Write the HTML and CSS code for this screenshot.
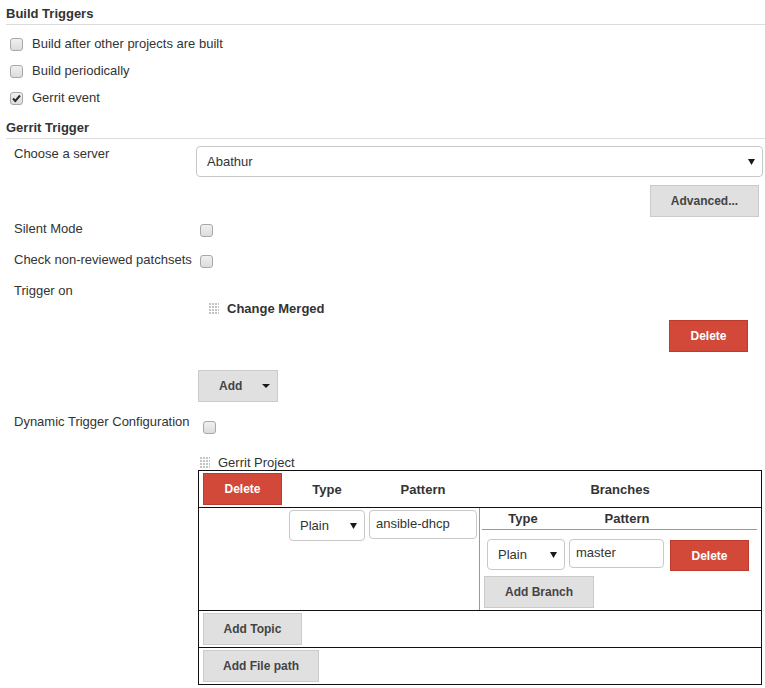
FILE: index.html
```html
<!DOCTYPE html>
<html>
<head>
<meta charset="utf-8">
<title>Build Triggers</title>
<link rel="stylesheet" href="styles.css">
</head>
<body>
<div class="section-title title-build">Build Triggers</div>
<div class="checks">
  <div class="check-row"><span class="cb"></span><span>Build after other projects are built</span></div>
  <div class="check-row"><span class="cb"></span><span>Build periodically</span></div>
  <div class="check-row"><span class="cb checked"><svg width="11" height="11" viewBox="0 0 11 11"><path d="M2 5.5 L4.3 8 L9 2.5" fill="none" stroke="#2b2b2b" stroke-width="2"/></svg></span><span>Gerrit event</span></div>
</div>
<div class="section-title title-gerrit">Gerrit Trigger</div>
<div class="form">
  <div class="row row-server">
    <div class="label">Choose a server</div>
    <div class="field">
      <div class="select select-wide"><span>Abathur</span><svg class="arrow" width="7" height="6" viewBox="0 0 7 6"><path d="M0 0 H7 L3.5 6 Z" fill="#1a1a1a"/></svg></div>
      <div class="adv-row"><button class="btn gray btn-adv">Advanced...</button></div>
    </div>
  </div>
  <div class="row row-check row-silent">
    <div class="label">Silent Mode</div>
    <div class="field"><span class="cb"></span></div>
  </div>
  <div class="row row-check">
    <div class="label">Check non-reviewed patchsets</div>
    <div class="field"><span class="cb"></span></div>
  </div>
  <div class="row row-trigger">
    <div class="label">Trigger on</div>
    <div class="field">
      <div class="repeated">
        <div class="rep-head"><span class="handle"></span><span class="rep-name">Change Merged</span></div>
        <div class="rep-actions"><button class="btn red btn-del">Delete</button></div>
      </div>
      <div class="add-wrap"><button class="btn gray btn-add"><span>Add</span><svg width="8" height="4" viewBox="0 0 8 4"><path d="M0 0 H8 L4 4 Z" fill="#1a1a1a"/></svg></button></div>
    </div>
  </div>
  <div class="row row-dynamic">
    <div class="label">Dynamic Trigger Configuration</div>
    <div class="field"><span class="cb"></span></div>
  </div>
  <div class="row row-project">
    <div class="label"></div>
    <div class="field">
      <div class="proj-head"><span class="handle"></span><span>Gerrit Project</span></div>
      <div class="ptable">
        <div class="prow prow-head">
          <div class="pcell cell-del"><button class="btn red btn-del">Delete</button></div>
          <div class="pcell th">Type</div>
          <div class="pcell th">Pattern</div>
          <div class="pcell th">Branches</div>
        </div>
        <div class="prow prow-body">
          <div class="pcell"></div>
          <div class="pcell cell-type"><div class="select select-type"><span>Plain</span><svg class="arrow" width="7" height="6" viewBox="0 0 7 6"><path d="M0 0 H7 L3.5 6 Z" fill="#1a1a1a"/></svg></div></div>
          <div class="pcell cell-pattern"><div class="input input-pattern">ansible-dhcp</div></div>
          <div class="pcell cell-branches">
            <div class="branches">
              <div class="br-head"><span class="br-type">Type</span><span class="br-pattern">Pattern</span></div>
              <div class="br-entry">
                <div class="select select-btype"><span>Plain</span><svg class="arrow" width="7" height="6" viewBox="0 0 7 6"><path d="M0 0 H7 L3.5 6 Z" fill="#1a1a1a"/></svg></div>
                <div class="input input-branch">master</div>
                <button class="btn red btn-del btn-del-branch">Delete</button>
              </div>
              <button class="btn gray btn-addbranch">Add Branch</button>
            </div>
          </div>
        </div>
        <div class="prow-full"><button class="btn gray btn-topic">Add Topic</button></div>
        <div class="prow-full"><button class="btn gray btn-file">Add File path</button></div>
      </div>
    </div>
  </div>
</div>
</body>
</html>
```

FILE: styles.css
```css
* { box-sizing: border-box; }

body {
  margin: 0;
  font-family: "Liberation Sans", Arial, sans-serif;
  font-size: 13px;
  color: #333;
  background: #fff;
}

.section-title {
  margin-left: 6px;
  font-weight: bold;
  line-height: 16px;
  border-bottom: 1px solid #dcdcdc;
}
.title-build { padding-top: 6px; height: 25px; }
.title-gerrit { padding-top: 9px; height: 28px; }

.checks { padding-top: 5px; }
.check-row {
  display: flex;
  align-items: center;
  height: 27px;
  padding-left: 10px;
}
.check-row .cb { margin-right: 9px; margin-top: 2px; }

.cb {
  display: inline-flex;
  align-items: center;
  justify-content: center;
  width: 13px;
  height: 13px;
  border: 1px solid #a8a8a8;
  border-radius: 3px;
  background: linear-gradient(#f0f0f0, #dcdcdc);
  flex: none;
}
.field > .cb { display: flex; }

.form { padding: 4px 2px 0 14px; }
.row {
  display: grid;
  grid-template-columns: 182px 1fr;
}
.label { line-height: 16px; padding-top: 1px; }

.row-server .label { padding-top: 3px; }
.select {
  display: flex;
  align-items: center;
  justify-content: space-between;
  border: 1px solid #c8c8c8;
  border-radius: 4px;
  background: #fff;
}
.select-wide {
  margin-top: 3px;
  height: 31px;
  padding: 0 7px 0 10px;
}
.adv-row {
  display: flex;
  justify-content: flex-end;
  padding-right: 4px;
  margin-top: 8px;
}

.btn {
  display: inline-flex;
  align-items: center;
  justify-content: center;
  font-family: "Liberation Sans", Arial, sans-serif;
  font-size: 12px;
  font-weight: bold;
  height: 32px;
  padding: 0;
  border-radius: 0;
  flex: none;
}
.gray {
  background: #e0e0e0;
  border: 1px solid #cbcbcb;
  color: #444;
}
.red {
  background: #d24939;
  border: 1px solid #bd3b2d;
  color: #fff;
}
.btn-adv { width: 109px; }
.btn-del { width: 79px; }

.row-check { height: 31px; }
.row-silent { margin-top: 3px; }
.row-check .cb { margin: 4px 0 0 4px; }

.repeated { margin-top: 18px; }
.rep-head {
  display: flex;
  align-items: center;
  height: 16px;
  padding-left: 12px;
}
.handle {
  width: 11px;
  height: 13px;
  margin-right: 8px;
  background-image:
    linear-gradient(90deg, #fff 1px, transparent 1px),
    linear-gradient(#fff 1px, #c4c4c4 1px);
  background-size: 3px 3px;
  flex: none;
}
.rep-name { font-weight: bold; }
.rep-actions {
  display: flex;
  justify-content: flex-end;
  padding-right: 15px;
  margin-top: 4px;
}
.add-wrap { margin-top: 18px; padding-left: 2px; }
.btn-add {
  width: 80px;
  justify-content: flex-start;
  padding-left: 20px;
  gap: 20px;
}

.row-dynamic { margin-top: 11px; }
.row-dynamic .cb { margin: 8px 0 0 7px; }

.proj-head {
  display: flex;
  align-items: center;
  height: 16px;
  margin-top: 20px;
  padding-left: 3px;
}
.proj-head .handle { margin-right: 8px; }

.ptable {
  margin: 0 2px;
  border: 1px solid #111;
}
.prow {
  display: grid;
  grid-template-columns: 88px 80px 112px 282px;
}
.prow-head { height: 36px; }
.prow-body { height: 103px; border-top: 1px solid #111; }
.prow-full {
  height: 37px;
  border-top: 1px solid #111;
  padding: 2px 0 0 4px;
}
.cell-del { padding: 2px 0 0 4px; }
.th {
  display: flex;
  align-items: center;
  justify-content: center;
  font-weight: bold;
}
.cell-type, .cell-pattern { padding: 2px 0 0 2px; }
.select-type {
  width: 76px;
  height: 31px;
  padding: 0 7px 0 10px;
}
.input {
  display: flex;
  align-items: center;
  border: 1px solid #c8c8c8;
  border-radius: 4px;
  padding: 0 0 2px 6px;
  background: #fff;
}
.input-pattern { width: 108px; height: 29px; }

.cell-branches { border-left: 1px solid #999; }
.branches { margin: 0 4px 0 2px; }
.br-head {
  display: flex;
  height: 22px;
  border-bottom: 1px solid #999;
  font-weight: bold;
  line-height: 21px;
}
.br-type { width: 82px; text-align: center; }
.br-pattern { width: 126px; text-align: center; }
.br-entry {
  display: flex;
  align-items: flex-start;
  margin-top: 9px;
  padding-left: 5px;
  height: 32px;
}
.select-btype {
  width: 78px;
  height: 31px;
  padding: 0 7px 0 10px;
}
.input-branch { width: 95px; height: 29px; margin-left: 4px; }
.btn-del-branch { height: 31px; margin: 1px 0 0 6px; }
.btn-addbranch { width: 110px; margin: 5px 0 0 2px; }
.btn-topic { width: 99px; }
.btn-file { width: 116px; }
```
